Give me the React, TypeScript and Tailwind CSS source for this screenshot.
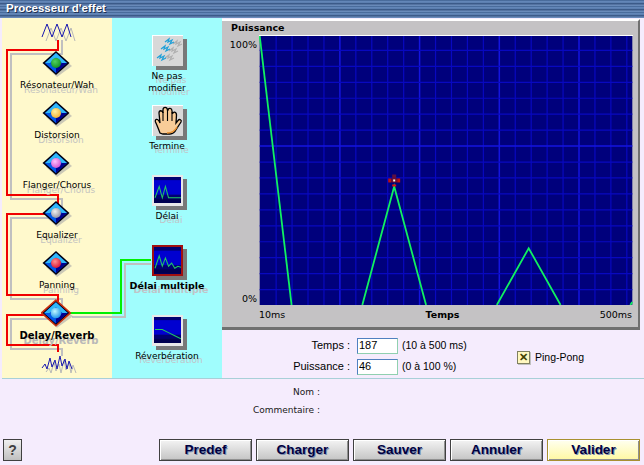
const dejavu = "font-['DejaVu_Sans',sans-serif]";
const arial = "font-['Liberation_Sans',sans-serif]";

const effects = [
  { name: 'Résonateur/Wah', ball: '#109020', hi: '#50d060' },
  { name: 'Distorsion', ball: '#f0b030', hi: '#fff0a0' },
  { name: 'Flanger/Chorus', ball: '#d050d0', hi: '#ffc0ff' },
  { name: 'Equalizer', ball: '#9090a0', hi: '#f0f0f0' },
  { name: 'Panning', ball: '#d81030', hi: '#ff9090' },
];

function Diamond({ ball, hi, id, active }: { ball: string; hi: string; id: string; active?: boolean }) {
  return (
    <svg width={active ? 32 : 30} height={active ? 30 : 26} viewBox="0 0 30 26" className="shrink-0">
      <defs>
        <radialGradient id={id} cx="0.4" cy="0.35" r="0.7">
          <stop offset="0" stopColor={hi} />
          <stop offset="1" stopColor={ball} />
        </radialGradient>
      </defs>
      <polygon points="15,3 30,15 15,26 4,16" fill="#a8a8a8" opacity="0.6" />
      <polygon
        points="14,0 27.5,12 14,24 0.5,12"
        fill="#000010"
        stroke={active ? '#c83010' : 'none'}
        strokeWidth={active ? 1.5 : 0}
      />
      <polygon points="14,2 25,12 14,22 3,12" fill="#0038d8" />
      <polygon points="14,2 25,12 20,12 14,6.5 8,12 3,12" fill="#30b8f8" />
      <polygon points="3,12 8,12 14,17.5 14,22" fill="#0058e8" />
      <polygon points="25,12 20,12 14,17.5 14,22" fill="#000090" />
      <circle cx="14" cy="12" r="5" fill={`url(#${id})`} />
    </svg>
  );
}

function Wave({ noisy }: { noisy?: boolean }) {
  const pts = noisy
    ? '1,13 4,9 6,14 9,3 11,12 14,5 16,14 19,1 21,11 24,4 26,14 28,6 31,14'
    : '1,14 6,1 11,14 16,1 21,14 26,1 30,14';
  return (
    <svg width="36" height="20" viewBox="0 0 36 20" className="shrink-0">
      <polyline points={pts} transform="translate(4,4)" fill="none" stroke="#b8b8b8" strokeWidth="1" />
      <polyline points={pts} fill="none" stroke="#1818b0" strokeWidth="1" />
    </svg>
  );
}

function Screen({ curve }: { curve: string }) {
  return (
    <svg viewBox="0 0 26 25" className="w-full h-full">
      <rect width="26" height="25" fill="#000070" />
      <rect y="3" width="26" height="14" fill="#0000d0" />
      <rect y="21" width="26" height="4" fill="#000050" />
      <polyline points={curve} fill="none" stroke="#20c860" strokeWidth="1" />
    </svg>
  );
}

function Hand() {
  return (
    <svg viewBox="0 0 30 30" className="w-full h-full">
      <path
        d="M7 27 C5 22 4 19 2.5 16 C1.5 13 4.5 12.5 6 15 L7 17 L6 7 C6 4 9.5 4 10 7 L10 4 C10 0.5 14 0.5 14.5 4 L15 4 C15.5 1.5 19 2 19 5 L19.5 8 C20 5 23.5 5.5 23.5 9 L23 17 L25 14.5 C26.5 12.5 29 14 28 16 L23.5 23 C22 26 20 28 17 28 L10 28 Z"
        fill="#f8cc98"
        stroke="#000"
        strokeWidth="1.3"
      />
      <path d="M10 6 V15 M14.5 4 V15 M19 6 V15" stroke="#000" strokeWidth="1.1" fill="none" />
      <path d="M14 27 C18 27 22 25 24 21" stroke="#e89030" strokeWidth="1.5" fill="none" />
    </svg>
  );
}

function Squiggles() {
  const z = (x: number, y: number, color: string) => (
    <polyline
      points={`${x},${y + 3} ${x + 4},${y} ${x + 3},${y + 3} ${x + 7},${y + 1} ${x + 5},${y + 5} ${x + 9},${y + 3}`}
      fill="none"
      stroke={color}
      strokeWidth="1.2"
    />
  );
  return (
    <svg viewBox="0 0 30 30" className="w-full h-full">
      {z(20, 5, '#b0b0b0')}
      {z(16, 12, '#b0b0b0')}
      {z(12, 19, '#b0b0b0')}
      {z(12, 3, '#20a0d8')}
      {z(8, 10, '#20a0d8')}
      {z(4, 19, '#20a0d8')}
    </svg>
  );
}

function Tool({ lines, bold, children, frame }: { lines: string[]; bold?: boolean; children: React.ReactNode; frame: string }) {
  return (
    <div className="h-[70px] flex flex-col items-center">
      <div className={`w-[31px] h-[31px] shrink-0 shadow-[4px_4px_0_#787878] ${frame}`}>{children}</div>
      <div className={`mt-[4px] text-center leading-[12px] text-black whitespace-nowrap [text-shadow:4px_4px_0_#c0c4c8] ${dejavu} ${bold ? 'font-bold text-[9.5px]' : 'text-[9px]'}`}>
        {lines.map((l) => (
          <div key={l}>{l}</div>
        ))}
      </div>
    </div>
  );
}

function Wires() {
  return (
    <svg width="222" height="360" viewBox="0 0 222 360" className="absolute left-0 top-0">
      <g fill="none" stroke="#c0c0c0" strokeWidth="2">
        <polyline points="62,22 62,36 11,36 11,181 62,181 62,190" />
        <polyline points="60,200 11,200 11,281 62,281 62,290" />
        <polyline points="60,301 11,301 11,331 62,331 62,338" />
        <polyline points="72,299 125,299 125,246 151,246" />
      </g>
      <g fill="none" stroke="#f00000" strokeWidth="2">
        <polyline points="58,22 58,32 7,32 7,177 58,177 58,186" />
        <polyline points="46,196 7,196 7,277 58,277 58,286" />
        <polyline points="46,297 7,297 7,327 58,327 58,334" />
      </g>
      <polyline points="70,295 121,295 121,242 151,242" fill="none" stroke="#00f000" strokeWidth="2" />
    </svg>
  );
}

function Plot() {
  const v: number[] = [];
  const h: number[] = [];
  for (let x = 16; x < 374; x += 16) v.push(x);
  for (let y = 14; y < 270; y += 16) h.push(y);
  return (
    <svg width="374" height="270" viewBox="0 0 374 270" className="block border-t border-white shrink-0">
      <rect width="374" height="270" fill="#00007c" />
      {v.map((x) => (
        <line
          key={x}
          x1={x + 0.5}
          x2={x + 0.5}
          y1="0"
          y2="270"
          stroke={x % 80 === 0 ? '#1414e0' : '#0808c0'}
          strokeWidth={x % 80 === 0 ? 1.5 : 1.2}
        />
      ))}
      {h.map((y) => (
        <line
          key={y}
          x1="0"
          x2="374"
          y1={y + 0.5}
          y2={y + 0.5}
          stroke={y === 110 ? '#1414e0' : '#0808c0'}
          strokeWidth={y === 110 ? 1.5 : 1.2}
        />
      ))}
      <g fill="none" stroke="#10f060" strokeWidth="1.8">
        <polyline points="0,0 32,270" />
        <polyline points="103,270 135,151 167,270" />
        <polyline points="238,270 270,213 302,270" />
        <polyline points="372,270 374,267" />
      </g>
      <g>
        <rect x="133" y="139" width="4" height="6" fill="#601040" />
        <rect x="129" y="143" width="3" height="4" fill="#c01010" />
        <rect x="138" y="143" width="3" height="4" fill="#c01010" />
        <rect x="132" y="143" width="6" height="4" fill="#701030" />
        <rect x="134" y="144" width="2" height="2" fill="#ffffff" />
        <rect x="133" y="149" width="4" height="2" fill="#e01010" />
      </g>
    </svg>
  );
}

function ActionButton({ label, yellow }: { label: string; yellow?: boolean }) {
  return (
    <button
      className={`w-[93px] h-[22px] border border-[#404040] shadow-[inset_1px_1px_0_#ffffff,inset_-1px_-1px_0_#909090] text-[13.5px] font-bold text-[#000040] [text-shadow:1px_1px_0_#8090b0] ${arial} ${
        yellow ? 'bg-gradient-to-b from-[#fffff0] to-[#fff8a0] border-[#a89030]' : 'bg-gradient-to-b from-[#f4f4f4] to-[#c4c4c4]'
      }`}
    >
      {label}
    </button>
  );
}

function Field({ label, value, hint }: { label: string; value: string; hint: string }) {
  return (
    <div className="flex items-center h-[21px]">
      <span className="w-[128px] text-right text-[11px] text-black">{label}</span>
      <input
        readOnly
        value={value}
        className="ml-[7px] w-[41px] h-[16px] px-[1px] bg-white border border-[#5080c0] border-r-[#90d0b0] border-b-[#90d0b0] text-[11px] text-black outline-none"
      />
      <span className="ml-[4px] text-[10.5px] text-black">{hint}</span>
    </div>
  );
}

export default function App() {
  return (
    <div className={`w-[644px] h-[465px] overflow-hidden flex flex-col bg-[#f5ecfd] ${arial}`}>
      <div className="h-[18px] shrink-0 flex items-center pl-[6px] bg-[repeating-linear-gradient(180deg,#3d5f8e_0px,#6f93c6_2px,#4a6b9a_3px,#2d4a78_4px,#7c9ccb_5px,#5578a8_6px)]">
        <span className={`text-[11.5px] font-bold text-white [text-shadow:1px_1px_0_#203050] ${arial}`}>
          Processeur d'effet
        </span>
      </div>

      <div className="h-[360px] shrink-0 flex relative pl-[2px]">
        <div className="w-[110px] bg-[#fff9cc]" />
        <div className="w-[110px] bg-[#a0fdfd]" />
        <Wires />
        <div className="absolute left-[2px] top-0 w-[110px] h-[360px] flex flex-col items-center">
          <div className="h-[33px] pt-[5px] ml-[3px]">
            <Wave />
          </div>
          {effects.map((e) => (
            <div key={e.name} className="h-[50px] shrink-0 flex flex-col items-center">
              <Diamond id={`ball-${e.name.slice(0, 3)}`} ball={e.ball} hi={e.hi} />
              <div className={`mt-[2px] text-[9px] leading-[12px] whitespace-nowrap text-black [text-shadow:4px_5px_0_#c4c4c0] ${dejavu}`}>
                {e.name}
              </div>
            </div>
          ))}
          <div className="h-[57px] shrink-0 flex flex-col items-center -mt-[2px]">
            <Diamond id="ball-del" ball="#1890e8" hi="#c0f8ff" active />
            <div className={`mt-[1px] text-[10px] leading-[12px] font-bold whitespace-nowrap text-black [text-shadow:4px_5px_0_#b8b8b8] ${dejavu}`}>
              Delay/Reverb
            </div>
          </div>
          <div className="ml-[4px] -mt-[1px]">
            <Wave noisy />
          </div>
        </div>
        <div className="absolute left-[112px] top-[17px] w-[110px] flex flex-col items-center">
          <Tool lines={['Ne pas', 'modifier']} frame="bg-[#d8d8d8] border-t border-l border-white">
            <Squiggles />
          </Tool>
          <Tool lines={['Termine']} frame="bg-[#d8d8d8] border-t border-l border-white">
            <Hand />
          </Tool>
          <Tool lines={['Délai']} frame="bg-[#000070] border-2 border-[#e8e8e8] border-b-[3px]">
            <Screen curve="1,20 5,9 8,20 11,9 14,20 26,20" />
          </Tool>
          <Tool lines={['Délai multiple']} bold frame="bg-[#000070] border-2 border-[#a01010]">
            <Screen curve="1,20 5,8 8,18 11,10 14,18 17,15 20,20 23,18 26,19" />
          </Tool>
          <Tool lines={['Réverbération']} frame="bg-[#000070] border-2 border-[#e8e8e8] border-b-[3px]">
            <Screen curve="1,12 8,12 14,15 20,18 26,21" />
          </Tool>
        </div>

        <div className="w-[418px] flex flex-col">
          <div className={`h-[311px] mt-[1px] shrink-0 bg-[#c4c2c4] border-t-2 border-t-white border-r-2 border-r-[#707070] border-b-[3px] border-b-[#707070] flex flex-col ${dejavu}`}>
            <div className="h-[14px] shrink-0 pl-[9px] text-[9.5px] leading-[14px] font-bold text-black">Puissance</div>
            <div className="flex">
              <div className="w-[37px] h-[270px] shrink-0 flex flex-col justify-between items-end pr-[2px] pt-[4px] text-[9.5px] leading-[12px] text-black">
                <span>100%</span>
                <span>0%</span>
              </div>
              <Plot />
            </div>
            <div className="w-[374px] ml-[37px] mt-[4px] flex justify-between text-[9.5px] leading-[12px] text-black pr-[1px]">
              <span>10ms</span>
              <span className="font-bold">Temps</span>
              <span>500ms</span>
            </div>
          </div>
          <div className="flex items-center pt-[5px]">
            <div className="w-[295px] flex flex-col shrink-0">
              <Field label="Temps :" value="187" hint="(10 à 500 ms)" />
              <Field label="Puissance :" value="46" hint="(0 à 100 %)" />
            </div>
            <div className="mt-[3px] flex items-center gap-[5px]">
              <div className="w-[13px] h-[13px] flex items-center justify-center bg-[#fff8c0] border border-[#808060] shadow-[1px_1px_0_#c0c0c0] text-[11px] font-bold leading-none text-[#404000]">
                ✕
              </div>
              <span className="text-[10.5px] text-black">Ping-Pong</span>
            </div>
          </div>
        </div>
      </div>

      <div className={`flex-1 ml-[2px] border-t border-t-[#a8d0d8] flex flex-col ${dejavu}`}>
        <div className="pt-[7px] flex flex-col gap-[6px] text-[9px] leading-[12px] text-[#202020]">
          <div className="w-[318px] text-right">Nom :</div>
          <div className="w-[318px] text-right">Commentaire :</div>
        </div>
        <div className="mt-auto mb-[4px] flex items-center justify-between pr-[4px] pl-[1px]">
          <button className={`w-[19px] h-[22px] border border-[#404040] bg-gradient-to-b from-[#f0f0f0] to-[#c0c0c0] text-[14px] font-bold text-[#404040] ${arial}`}>
            ?
          </button>
          <div className="flex gap-[4px]">
            <ActionButton label="Predef" />
            <ActionButton label="Charger" />
            <ActionButton label="Sauver" />
            <ActionButton label="Annuler" />
            <ActionButton label="Valider" yellow />
          </div>
        </div>
      </div>
    </div>
  );
}
